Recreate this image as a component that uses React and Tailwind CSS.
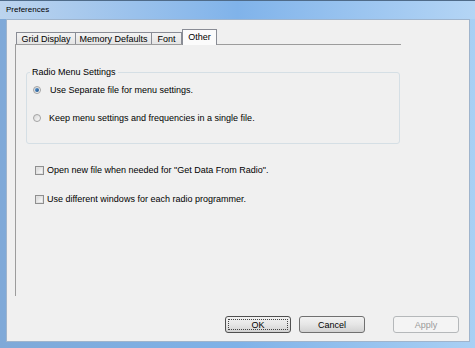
import React from "react";

function Tab({ label, width, selected }) {
  if (selected) {
    return (
      <div
        className={`relative z-10 -mb-px flex h-[16px] items-start justify-center border-x border-t border-[#898c95] bg-[#fbfbfb] pt-[2px] ${width}`}
      >
        <span className="leading-[10px]">{label}</span>
      </div>
    );
  }
  return (
    <div
      className={`flex h-[12px] items-center justify-center border-l border-t border-[#898c95] bg-gradient-to-b from-[#f3f3f3] to-[#e4e4e4] ${width}`}
    >
      <span className="leading-[10px]">{label}</span>
    </div>
  );
}

function Radio({ checked, label, gap }) {
  return (
    <div className="flex h-[12px] items-center">
      <span className="ml-[6px] flex h-[8px] w-[8px] items-center justify-center rounded-full border border-[#a3a3a3] bg-gradient-to-br from-[#d8d8d8] to-[#fafafa]">
        {checked && (
          <span className="h-[4px] w-[4px] rounded-full bg-gradient-to-br from-[#5a9ad6] to-[#1b4f86]" />
        )}
      </span>
      <span className={`${gap} leading-[10px]`}>{label}</span>
    </div>
  );
}

function Check({ label }) {
  return (
    <div className="flex h-[12px] items-center">
      <span className="ml-[19px] flex h-[9px] w-[9px] items-center justify-center border border-[#8f8f8f] bg-[#f4f4f4]">
        <span className="h-[7px] w-[7px] border border-[#e2e2e2] bg-gradient-to-br from-[#d9d9d9] to-[#fbfbfb]" />
      </span>
      <span className="ml-[3px] leading-[10px]">{label}</span>
    </div>
  );
}

export default function App() {
  return (
    <div
      className="flex h-[348px] w-[475px] flex-col overflow-hidden border-t border-[#4f6b89] bg-gradient-to-r from-[#7fa9d8] via-[#7fb2e8] to-[#a9d0f4] text-[9px] text-black"
      style={{ fontFamily: '"Liberation Sans", Arial, sans-serif' }}
    >
      {/* Title bar */}
      <div className="flex h-[18px] items-center bg-gradient-to-r from-[#bcd4ee] via-[#80b3ea] to-[#b4d5f5] pl-[6px]">
        <span className="text-[8px] leading-[10px]">Preferences</span>
      </div>

      {/* Client area */}
      <div className="ml-[6px] mr-[5px] flex h-[323px] flex-col border border-[#9fb4cc] bg-[#f0f0f0]">
        {/* Tabs */}
        <div className="flex h-[24px] items-end pl-[9px] pt-[9px]">
          <Tab label="Grid Display" width="w-[59px]" />
          <Tab label="Memory Defaults" width="w-[76px]" />
          <Tab label="Font" width="w-[31px] border-r" />
          <Tab label="Other" width="w-[35px]" selected />
        </div>

        {/* Tab panel */}
        <div className="ml-[8px] flex h-[252px] w-[386px] flex-col border-l border-t border-[#9c9c9c] bg-[#f0f0f0]">
          <fieldset className="ml-[10px] mt-[22px] h-[77px] w-[374px] rounded-[3px] border border-[#d5dfe5]">
            <legend className="ml-[3px] px-[2px] leading-[10px]">Radio Menu Settings</legend>
            <div className="mt-[7px] flex flex-col gap-[16px]">
              <Radio checked label="Use Separate file for menu settings." gap="ml-[9px]" />
              <Radio label="Keep menu settings and frequencies in a single file." gap="ml-[8px]" />
            </div>
          </fieldset>

          <div className="mt-[20px] flex flex-col gap-[17px]">
            <Check label={'Open new file when needed for "Get Data From Radio".'} />
            <Check label="Use different windows for each radio programmer." />
          </div>
        </div>

        {/* Buttons */}
        <div className="mt-[20px] flex justify-end pr-[10px]">
          <button className="h-[17px] w-[66px] rounded-[3px] border border-[#505050] bg-gradient-to-b from-[#f2f2f2] via-[#e6e6e6] to-[#d2d2d2] leading-[10px] outline-1 outline-offset-[-4px] outline-dotted outline-[#444]">
            OK
          </button>
          <button className="ml-[8px] h-[17px] w-[66px] rounded-[3px] border border-[#707070] bg-gradient-to-b from-[#f2f2f2] via-[#e6e6e6] to-[#d2d2d2] leading-[10px]">
            Cancel
          </button>
          <button className="ml-[28px] h-[17px] w-[66px] rounded-[3px] border border-[#b5b8ba] bg-[#f4f4f4] leading-[10px] text-[#9a9a9a]">
            Apply
          </button>
        </div>
      </div>
    </div>
  );
}
